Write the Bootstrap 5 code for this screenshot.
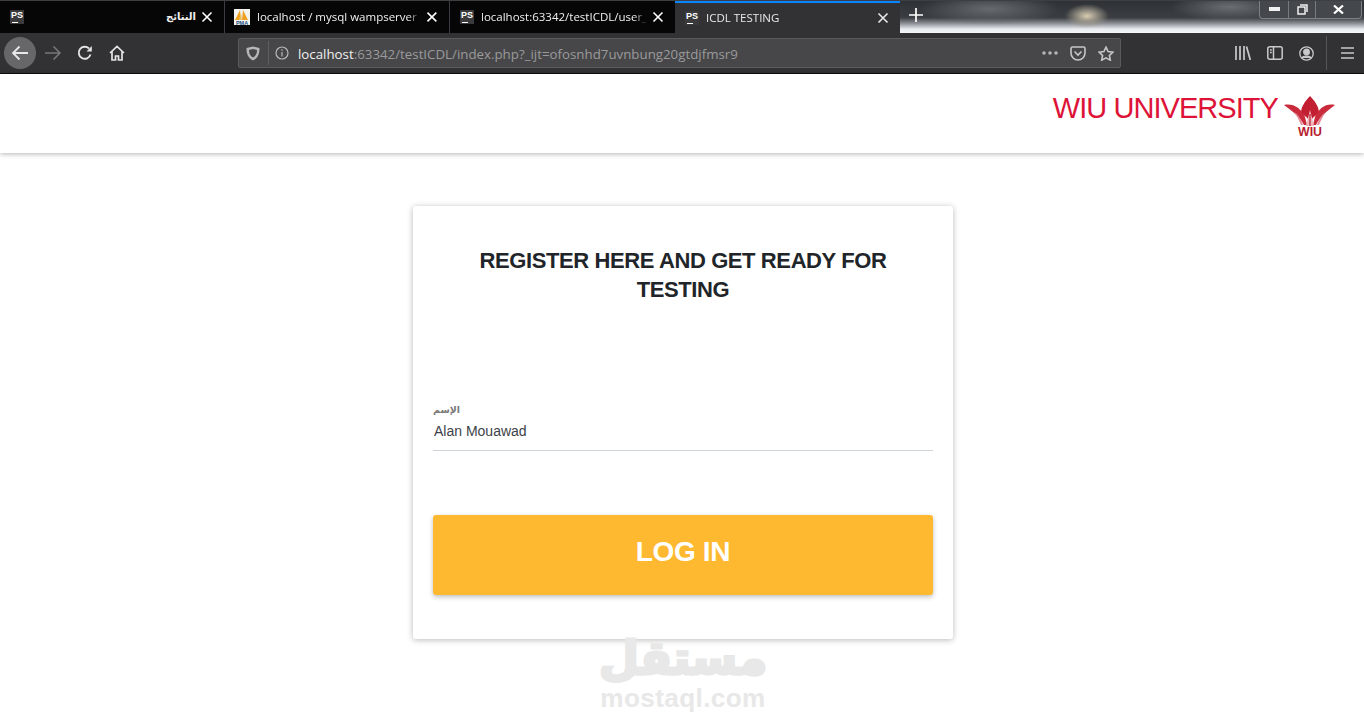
<!DOCTYPE html>
<html lang="en">
<head>
<meta charset="utf-8">
<title>ICDL TESTING</title>
<link href="https://cdn.jsdelivr.net/npm/bootstrap@5.3.0/dist/css/bootstrap.min.css" rel="stylesheet">
<style>
html,body{height:727px;overflow:hidden;background:#fff;font-family:"Liberation Sans",Arial,sans-serif;}
.tabstrip{height:33px;background:#060606;border-top:1px solid #3d3f42;}
.ff-tab{height:32px;color:#f0f0f0;font:11.5px/32px "Open Sans","Noto Sans",sans-serif;padding:0 11px 0 10px;border-right:1px solid #3a3d42;flex:none;overflow:hidden;}
.ff-tab.t1{width:225px;}
.ff-tab.t2{width:225px;padding-left:9px;}
.ff-tab.t3{width:225px;border-right:0;}
.ff-tab.t4{width:225px;background:#323234;border-top:2px solid #0a84ff;border-right:0;line-height:28px;color:#e8e8e8;padding-right:11px;}
.tab-label{flex:1 1 auto;min-width:0;white-space:nowrap;overflow:hidden;margin:0 5px 0 7px;-webkit-mask-image:linear-gradient(90deg,#000 92%,transparent);mask-image:linear-gradient(90deg,#000 92%,transparent);}
.tab-label.ar{text-align:right;font-family:"DejaVu Sans",sans-serif;font-size:10px;font-weight:700;margin-right:5px;-webkit-mask-image:none;mask-image:none;}
.ps-ico{width:14px;height:14px;background:#3a3a3d;color:#fff;font:700 9px/11px "Liberation Sans",sans-serif;text-align:center;flex:none;position:relative;}
.ps-ico::after{content:"";position:absolute;left:2px;bottom:1px;width:6px;height:1px;background:#fff;}
.pma-ico{flex:none;}
.wallpaper{flex:1 1 auto;height:32px;padding-left:9px;background:
 radial-gradient(ellipse 22px 12px at 187px 15px,#d9ccb0 0,#a09a8c 35%,transparent 100%),
 radial-gradient(ellipse 70px 16px at 90px 8px,#66696d 0,transparent 100%),
 radial-gradient(ellipse 60px 14px at 330px 6px,#6a6d71 0,transparent 100%),
 linear-gradient(180deg,#2e3135 0,#3b3e42 52%,#8c9096 70%,#e9ecf0 88%,#f6f8fa 100%);}
.winbtns{height:18px;margin-right:2px;border:1px solid #7c8187;border-top:0;border-radius:0 0 4px 4px;background:#44484d;}
.winbtns span{display:flex;align-items:center;justify-content:center;height:17px;border-right:1px solid #777b80;}
.winbtns span:last-child{border-right:0;}
.win-min{width:29px;}
.win-max{width:27px;}
.win-close{width:45px;}
.plus-ico{margin-top:7px;}
.toolbar{height:41px;background:#323234;border-bottom:1px solid #0f0f0f;padding:0 5px 0 4px;}
.round-back{width:32px;height:32px;border-radius:50%;background:#67676a;margin-right:1px;}
.tool-ico{width:32px;height:32px;display:flex;align-items:center;justify-content:center;flex:none;}
.urlbar{width:883px;height:30px;margin-left:105px;background:#474749;border:1px solid #5b5b5d;border-radius:2px;color:#9a9a9c;font:13.3px/28px "Open Sans","Noto Sans",sans-serif;padding:0 6px 0 7px;}
.urlbar b{font-weight:400;color:#f0f0f0;}
.url-sep{width:1px;height:24px;background:#5f5f61;margin:0 6px 0 8px;}
.url-text{margin-left:9px;padding-top:1px;}
.url-act{margin-left:12px;flex:none;}
.toolbar-sep{width:1px;height:34px;background:#555;margin:0 14px 0 12px;}
.burger{margin-right:5px;}
.site-head{height:79px;background:#fff;box-shadow:0 1px 5px rgba(0,0,0,.3);padding:14px 24px 0 0;position:relative;}
.brand-name{color:#dd1438;font-size:29px;line-height:40px;letter-spacing:-.95px;margin-right:2px;}
.logo-svg{margin-top:4px;}
.page-wrap{padding:53px 0 0 2px;}
.reg-card{width:540px;height:433px;border:0;border-radius:3px;box-shadow:0 1px 6px rgba(0,0,0,.28);padding:0 20px;}
.reg-title{font-size:22px;font-weight:700;line-height:29px;letter-spacing:-.4px;color:#212529;text-align:center;margin:40px 0 0;height:58px;}
.field-block{margin-top:99px;border-bottom:1px solid #ced4da;height:48px;}
.field-label{display:block;width:fit-content;font:700 9.500px/14px "DejaVu Sans",sans-serif;color:#7a7a7a;margin:0;white-space:nowrap;}
.field-input{border:0;outline:0;padding:0 0 0 1px;width:100%;font-size:14px;line-height:20px;height:20px;color:#3d4248;background:transparent;margin-top:4px;display:block;}
.login-btn{display:block;width:100%;height:80px;margin-top:64px;padding:0 0 6px;background:#ffb931;border:0;border-radius:3px;color:#fff;font-size:28px;font-weight:700;letter-spacing:-.35px;box-shadow:0 2px 5px rgba(0,0,0,.25);}
.login-btn:hover{background:#ffb931;color:#fff;}
.mark-wrap{position:absolute;left:583px;top:632px;width:200px;text-align:center;color:#e8e8e8;}
.mark-ar{font:700 46px/53px "DejaVu Sans",sans-serif;display:block;-webkit-text-stroke:3px #e8e8e8;}
.mark-en{font:700 26.2px/26px "Liberation Sans",sans-serif;display:block;letter-spacing:.35px;}
</style>
</head>
<body>
<div class="tabstrip d-flex">
  <div class="ff-tab t1 d-flex align-items-center">
    <span class="ps-ico">PS</span><span class="tab-label ar" dir="rtl">النتائج</span>
    <svg width="12" height="12" viewBox="0 0 12 12"><path d="M1.500 1.500l9 9M10.500 1.500l-9 9" stroke="#fff" stroke-width="1.600"/></svg>
  </div>
  <div class="ff-tab t2 d-flex align-items-center">
    <svg class="pma-ico" width="16" height="16" viewBox="0 0 16 16"><rect width="16" height="16" fill="#f3f3f0"/><path d="M1 11L6 1l1 10zM8 11l1-10 5 10z" fill="#f0a020"/><path d="M5 11l2-7 1 7z" fill="#e8c060"/><text x="8" y="15.500" text-anchor="middle" font-family="Liberation Sans" font-weight="700" font-size="5.500" fill="#1c4f80">PMA</text></svg>
    <span class="tab-label">localhost / mysql wampserver /</span>
    <svg width="12" height="12" viewBox="0 0 12 12"><path d="M1.500 1.500l9 9M10.500 1.500l-9 9" stroke="#fff" stroke-width="1.600"/></svg>
  </div>
  <div class="ff-tab t3 d-flex align-items-center">
    <span class="ps-ico">PS</span><span class="tab-label">localhost:63342/testICDL/user_</span>
    <svg width="12" height="12" viewBox="0 0 12 12"><path d="M1.500 1.500l9 9M10.500 1.500l-9 9" stroke="#fff" stroke-width="1.600"/></svg>
  </div>
  <div class="ff-tab t4 d-flex align-items-center">
    <span class="ps-ico">PS</span><span class="tab-label">ICDL TESTING</span>
    <svg width="12" height="12" viewBox="0 0 12 12"><path d="M1.500 1.500l9 9M10.500 1.500l-9 9" stroke="#e8e8e8" stroke-width="1.600"/></svg>
  </div>
  <div class="wallpaper d-flex justify-content-between">
    <svg class="plus-ico" width="14" height="14" viewBox="0 0 14 14"><path d="M7 0v14M0 7h14" stroke="#fff" stroke-width="1.700"/></svg>
    <div class="winbtns d-flex">
      <span class="win-min"><svg width="11" height="5" viewBox="0 0 11 5"><rect width="11" height="4" fill="#f0f0f0"/></svg></span>
      <span class="win-max"><svg width="11" height="11" viewBox="0 0 11 11" fill="none" stroke="#eee" stroke-width="1.500"><rect x="1" y="3" width="7" height="7"/><path d="M3 1h7v7"/></svg></span>
      <span class="win-close"><svg width="11" height="9" viewBox="0 0 11 9"><path d="M1 .5l9 8M10 .5l-9 8" stroke="#fff" stroke-width="2.200"/></svg></span>
    </div>
  </div>
</div>
<div class="toolbar d-flex align-items-center">
  <div class="round-back tool-ico"><svg width="18" height="16" viewBox="0 0 18 16" fill="none" stroke="#e8e8e8" stroke-width="1.800"><path d="M17 8H2M8.500 1.500L2 8l6.500 6.500"/></svg></div>
  <div class="tool-ico"><svg width="18" height="16" viewBox="0 0 18 16" fill="none" stroke="#77777a" stroke-width="1.600"><path d="M1 8h15M9.500 1.500L16 8l-6.500 6.500"/></svg></div>
  <div class="tool-ico"><svg width="16" height="16" viewBox="0 0 16 16" fill="none" stroke="#e4e4e4" stroke-width="1.900"><path d="M13.500 9.500A6 6 0 1 1 12 3.500"/><path d="M14.800 1v5.500H9.500" fill="#e4e4e4" stroke="none"/></svg></div>
  <div class="tool-ico"><svg width="16" height="16" viewBox="0 0 16 16" fill="none" stroke="#e4e4e4" stroke-width="1.700"><path d="M1 8l7-6.500L15 8M3 6.500V15h3.500v-4h3v4H13V6.500"/></svg></div>
  <div class="urlbar d-flex align-items-center">
    <svg width="14" height="15" viewBox="0 0 14 15" class="flex-shrink-0"><path d="M7 .5L13.500 2c0 6-1.500 10-6.500 12.500C2 12 .5 8 .5 2z" fill="#b6b6b8"/><path d="M7 3l4 1c0 3.500-1 6-4 7.500C4 10 3 7.500 3 4z" fill="#474749"/></svg>
    <span class="url-sep"></span>
    <svg width="14" height="14" viewBox="0 0 14 14" class="flex-shrink-0" fill="none" stroke="#b9b9bb" stroke-width="1.200"><circle cx="7" cy="7" r="6"/><path d="M7 6v4.500M7 3.300v1.500"/></svg>
    <span class="url-text flex-grow-1"><b>localhost</b>:63342/testICDL/index.php?_ijt=ofosnhd7uvnbung20gtdjfmsr9</span>
    <svg class="flex-shrink-0" width="16" height="4" viewBox="0 0 16 4" fill="#b5b5b7"><circle cx="2" cy="2" r="1.800"/><circle cx="8" cy="2" r="1.800"/><circle cx="14" cy="2" r="1.800"/></svg>
    <svg class="url-act" width="16" height="15" viewBox="0 0 16 15" fill="none" stroke="#c6c6c8" stroke-width="1.600"><path d="M1 2.500A1.500 1.500 0 0 1 2.500 1h11A1.500 1.500 0 0 1 15 2.500V7a7 7 0 0 1-14 0z"/><path d="M4.500 5.500L8 9l3.500-3.500"/></svg>
    <svg class="url-act" width="16" height="15" viewBox="0 0 16 15" fill="none" stroke="#c6c6c8" stroke-width="1.600"><path d="M8 1.200l2.100 4.400 4.800.6-3.500 3.300.9 4.700L8 11.900l-4.300 2.300.9-4.700L1.100 6.200l4.800-.6z"/></svg>
  </div>
  <div class="d-flex align-items-center ms-auto">
    <svg class="me-3" width="16" height="14" viewBox="0 0 16 14" stroke="#c9c9cb" stroke-width="1.700" fill="none"><path d="M1 0v14M5 0v14M9 0v14M11.500 .5l3.800 13.500"/></svg>
    <svg class="me-3" width="16" height="14" viewBox="0 0 16 14" fill="none" stroke="#c9c9cb" stroke-width="1.500"><rect x=".8" y=".8" width="14.400" height="12.400" rx="2"/><path d="M6.500 1v12M3 4h1.800M3 6.500h1.800"/></svg>
    <svg width="15" height="15" viewBox="0 0 15 15" fill="none" stroke="#c9c9cb" stroke-width="1.300"><circle cx="7.500" cy="7.500" r="6.700"/><circle cx="7.500" cy="6" r="2.800" fill="#c9c9cb"/><path d="M3 12c1-2.500 8-2.500 9 0" fill="#c9c9cb"/></svg>
    <span class="toolbar-sep"></span>
    <svg class="burger" width="13" height="12" viewBox="0 0 13 12" stroke="#c9c9cb" stroke-width="1.600"><path d="M0 1h13M0 6h13M0 11h13"/></svg>
  </div>
</div>
<header class="site-head d-flex justify-content-end">
  <span class="brand-name">WIU UNIVERSITY</span>
  <svg class="logo-svg" width="60" height="48" viewBox="0 0 60 48" aria-hidden="true">
    <path d="M30 4C35 9 39 15 39 21C37 23 34 24 32 27L30 22L28 27C26 24 23 23 21 21C21 15 25 9 30 4z" fill="#c21f32"/>
    <path d="M4 13C13 11 21 16 25 25L27 33L24 33C20 25 12 19 4 13z" fill="#c92a3c"/>
    <path d="M55 13C46 11 39 16 35 25L33 33L36 33C40 25 47 19 55 13z" fill="#c92a3c"/>
    <path d="M14 20C18 22 21 27 23 33H21C19 28 17 24 14 20zM46 20C42 22 39 27 37 33H39C41 28 43 24 46 20z" fill="#e48c98"/>
    <path d="M30 18L34 34H26z" fill="#f0b8be"/>
    <path d="M30 22v12" stroke="#b81f30" stroke-width="1.200"/>
    <text x="18" y="44" font-family="Liberation Sans" font-weight="700" font-size="12" textLength="24" lengthAdjust="spacingAndGlyphs" fill="#b81f30">WIU</text>
  </svg>
</header>
<main class="page-wrap d-flex justify-content-center">
  <div class="card reg-card">
    <h2 class="reg-title">REGISTER HERE AND GET READY FOR TESTING</h2>
    <div class="field-block">
      <label class="field-label" dir="rtl">الإسم</label>
      <input class="field-input" type="text" value="Alan Mouawad">
    </div>
    <button class="btn login-btn" type="button">LOG IN</button>
  </div>
</main>
<div class="mark-wrap"><span class="mark-ar" dir="rtl">مستقل</span><span class="mark-en">mostaql.com</span></div>
<script src="https://cdn.jsdelivr.net/npm/bootstrap@5.3.0/dist/js/bootstrap.bundle.min.js"></script>
</body>
</html>
